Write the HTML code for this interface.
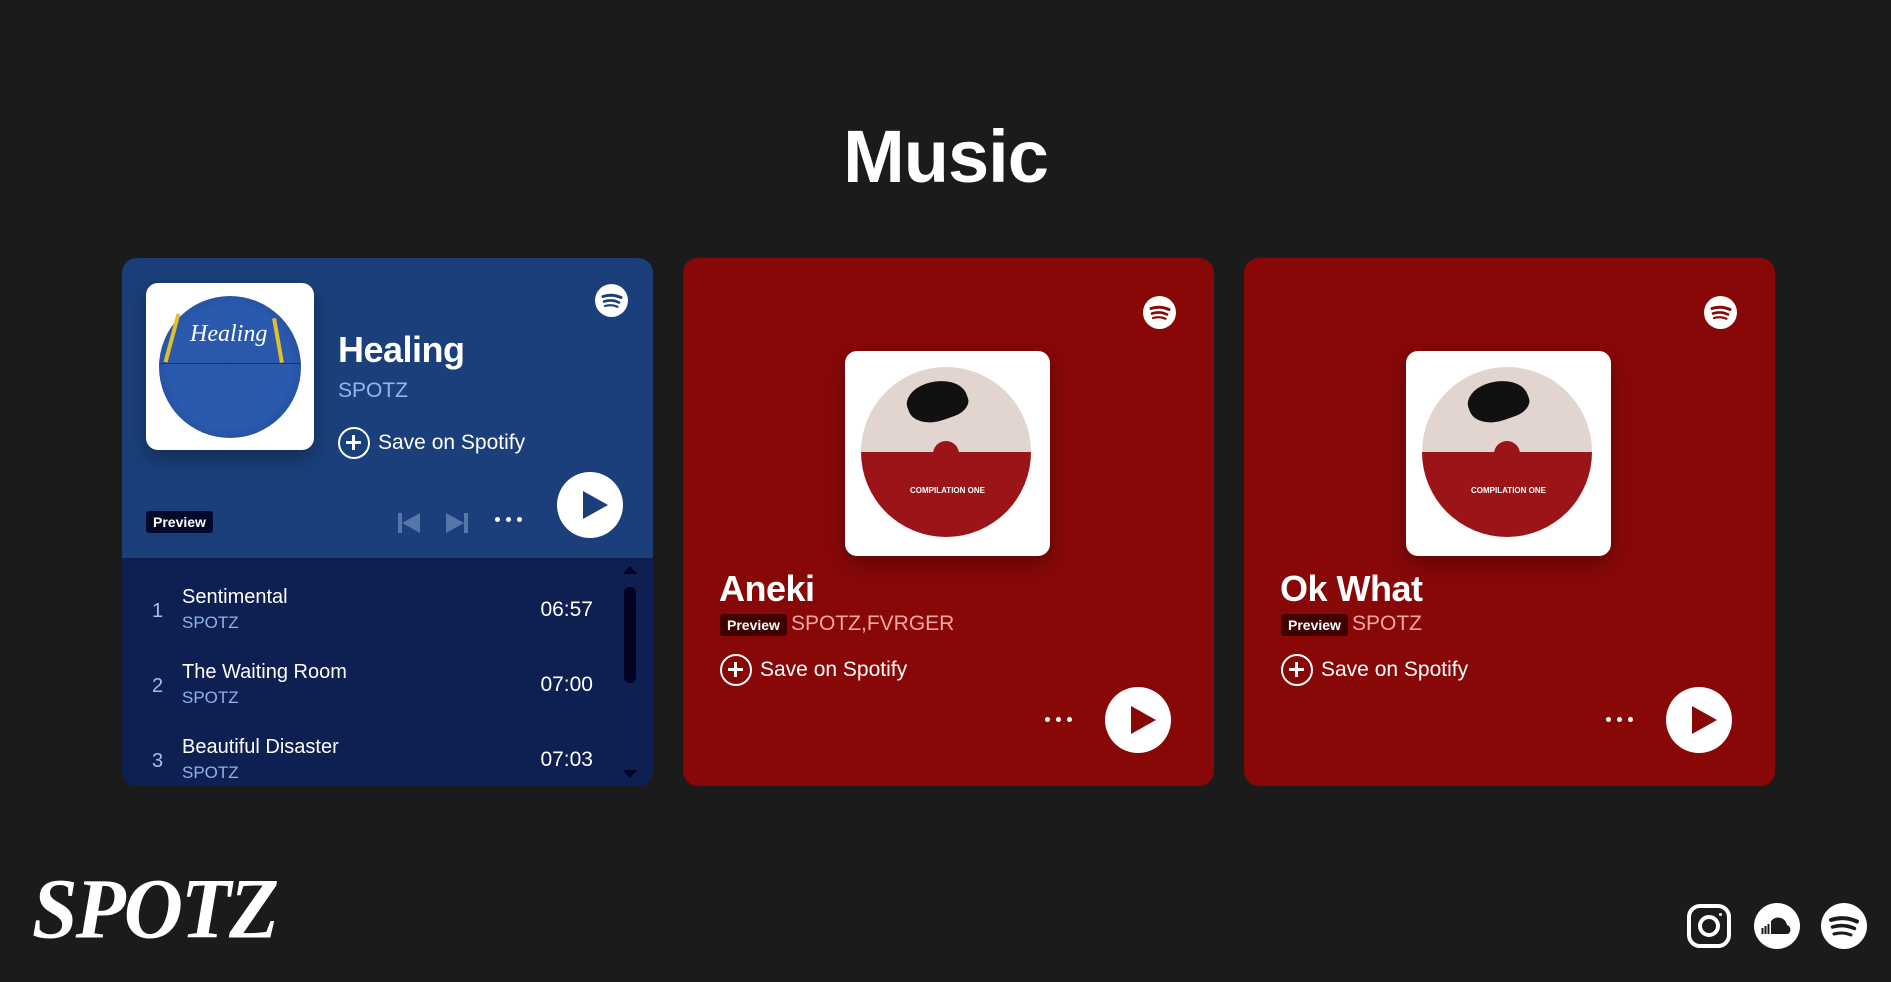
<!DOCTYPE html>
<html><head><meta charset="utf-8"><style>
*{margin:0;padding:0;box-sizing:border-box}
body{width:1891px;height:982px;background:#1b1b1b;font-family:"Liberation Sans",sans-serif;color:#fff;position:relative;overflow:hidden}
.abs{position:absolute}
h1{position:absolute;left:0;width:1891px;top:114px;text-align:center;font-size:74px;font-weight:bold;letter-spacing:-1px}
.card{position:absolute;top:258px;width:531px;height:528px;border-radius:15px;overflow:hidden}
.red{background:#880808}
.blue{background:#1a3f7a}
.sp{position:absolute;width:33px;height:33px;border-radius:50%;background:#fff}
.play{position:absolute;width:66px;height:66px;border-radius:50%;background:#fff}
.play:after{content:"";position:absolute;left:26px;top:19px;border-left:25px solid;border-top:14px solid transparent;border-bottom:14px solid transparent;border-left-color:inherit}
.dots{position:absolute;width:30px;height:6px}
.dots i{position:absolute;top:0;width:5px;height:5px;border-radius:50%;background:#fff}
.save{position:absolute;font-size:21px;display:flex;align-items:center;gap:8px}
.plus{width:32px;height:32px;border:2.5px solid #fff;border-radius:50%;position:relative}
.plus:before{content:"";position:absolute;left:6px;top:12px;width:15px;height:2.5px;background:#fff}
.plus:after{content:"";position:absolute;left:12.3px;top:6px;width:2.5px;height:15px;background:#fff}
.badge{position:absolute;font-size:14px;font-weight:bold;padding:3px 7px;border-radius:3px}
.art{position:absolute;background:#fff;border-radius:12px;box-shadow:0 8px 20px rgba(0,0,0,.3)}
.track{position:absolute;left:0;width:531px;height:50px}
.track .n{position:absolute;left:30px;top:14px;font-size:20px;color:#9fc0ef}
.track .t{position:absolute;left:60px;top:0;font-size:20px}
.track .a{position:absolute;left:60px;top:27px;font-size:17px;color:#8fb3ea}
.track .d{position:absolute;right:60px;top:12px;font-size:21px}
</style></head><body>
<h1>Music</h1>

<!-- Card 1 -->
<div class="card blue" style="left:122px">
  <div class="art" style="left:24px;top:25px;width:168px;height:167px">
    <div class="abs" style="left:13px;top:13px;width:142px;height:142px;border-radius:50%;background:radial-gradient(circle at 50% 50%,#2b57a8 0,#2a5aae 60%,#1f3f86 100%)"></div>
    <div class="abs" style="left:13px;top:80px;width:142px;height:1px;background:#1a3370"></div>
    <div class="abs" style="left:44px;top:38px;font-family:'Liberation Serif',serif;font-style:italic;font-size:24px;color:#fff">Healing</div>
    <div class="abs" style="left:24px;top:30px;width:4px;height:50px;background:#e0c030;transform:rotate(15deg)"></div>
    <div class="abs" style="left:130px;top:35px;width:4px;height:45px;background:#e0c030;transform:rotate(-10deg)"></div>
  </div>
  <div class="abs" style="left:216px;top:71px;font-size:36px;font-weight:bold;letter-spacing:-.5px">Healing</div>
  <div class="abs" style="left:216px;top:121px;font-size:21px;color:#8fb8f0">SPOTZ</div>
  <div class="save" style="left:216px;top:169px"><div class="plus"></div>Save on Spotify</div>
  <div class="sp" style="left:473px;top:26px"><svg width="33" height="33" viewBox="0 0 33 33" fill="none" stroke="#1a3f7a" stroke-linecap="round"><path d="M8 12.5q9-3 18 1" stroke-width="3"/><path d="M9 17.5q8-2.5 15 1" stroke-width="2.6"/><path d="M10 22q6.5-2 12.5 .8" stroke-width="2.2"/></svg></div>
  <div class="badge" style="left:24px;top:253px;background:#04082a">Preview</div>
  <svg class="abs" style="left:274px;top:253px" width="90" height="24"><g fill="#5577aa"><rect x="2" y="2" width="4" height="20"/><path d="M24 2v20L6 12z"/><path d="M50 2v20l18-10z"/><rect x="68" y="2" width="4" height="20"/></g></svg>
  <div class="dots" style="left:373px;top:259px"><i style="left:0"></i><i style="left:11px"></i><i style="left:22px"></i></div>
  <div class="play" style="left:435px;top:214px;border-left-color:#1a3f7a;color:#1a3f7a"></div>
  <div class="abs" style="left:0;top:300px;width:531px;height:228px;background:#0e1f52">
    <div class="track" style="top:28px"><span class="n">1</span><span class="t">Sentimental</span><span class="a">SPOTZ</span><span class="d">06:57</span></div>
    <div class="track" style="top:103px"><span class="n">2</span><span class="t">The Waiting Room</span><span class="a">SPOTZ</span><span class="d">07:00</span></div>
    <div class="track" style="top:178px"><span class="n">3</span><span class="t">Beautiful Disaster</span><span class="a">SPOTZ</span><span class="d">07:03</span></div>
    <div class="abs" style="left:501px;top:8px;border-bottom:8px solid #010325;border-left:7px solid transparent;border-right:7px solid transparent"></div>
    <div class="abs" style="left:502px;top:29px;width:12px;height:96px;border-radius:6px;background:#010325"></div>
    <div class="abs" style="left:501px;top:212px;border-top:8px solid #010325;border-left:7px solid transparent;border-right:7px solid transparent"></div>
  </div>
</div>

<!-- Card 2 & 3 -->
<div class="card red" style="left:683px">
  <div class="art" style="left:162px;top:93px;width:205px;height:205px">
    <div class="abs" style="left:16px;top:16px;width:170px;height:170px;border-radius:50%;background:linear-gradient(#e2d4cf 0,#e2d4cf 50%,#9b1418 50%)"></div>
    <div class="abs" style="left:88px;top:90px;width:26px;height:14px;border-radius:13px 13px 0 0;background:#9b1418"></div>
    <div class="abs" style="left:62px;top:30px;width:60px;height:40px;background:#111;border-radius:40% 60% 30% 50%;transform:rotate(-20deg)"></div>
    <div class="abs" style="left:0;top:135px;width:205px;text-align:center;font-size:8px;font-weight:bold;color:#fff">COMPILATION ONE</div>
  </div>
  <div class="abs" style="left:36px;top:310px;font-size:36px;font-weight:bold;letter-spacing:-.5px">Aneki</div>
  <div class="badge" style="left:37px;top:356px;background:#400000">Preview</div>
  <div class="abs" style="left:108px;top:354px;font-size:21px;color:#f7a6a0">SPOTZ,FVRGER</div>
  <div class="save" style="left:37px;top:396px"><div class="plus"></div>Save on Spotify</div>
  <div class="sp" style="left:460px;top:38px"><svg width="33" height="33" viewBox="0 0 33 33" fill="none" stroke="#880808" stroke-linecap="round"><path d="M8 12.5q9-3 18 1" stroke-width="3"/><path d="M9 17.5q8-2.5 15 1" stroke-width="2.6"/><path d="M10 22q6.5-2 12.5 .8" stroke-width="2.2"/></svg></div>
  <div class="dots" style="left:362px;top:459px"><i style="left:0"></i><i style="left:11px"></i><i style="left:22px"></i></div>
  <div class="play" style="left:422px;top:429px;border-left-color:#880808"></div>
</div>
<div class="card red" style="left:1244px">
  <div class="art" style="left:162px;top:93px;width:205px;height:205px">
    <div class="abs" style="left:16px;top:16px;width:170px;height:170px;border-radius:50%;background:linear-gradient(#e2d4cf 0,#e2d4cf 50%,#9b1418 50%)"></div>
    <div class="abs" style="left:88px;top:90px;width:26px;height:14px;border-radius:13px 13px 0 0;background:#9b1418"></div>
    <div class="abs" style="left:62px;top:30px;width:60px;height:40px;background:#111;border-radius:40% 60% 30% 50%;transform:rotate(-20deg)"></div>
    <div class="abs" style="left:0;top:135px;width:205px;text-align:center;font-size:8px;font-weight:bold;color:#fff">COMPILATION ONE</div>
  </div>
  <div class="abs" style="left:36px;top:310px;font-size:36px;font-weight:bold;letter-spacing:-.5px">Ok What</div>
  <div class="badge" style="left:37px;top:356px;background:#400000">Preview</div>
  <div class="abs" style="left:108px;top:354px;font-size:21px;color:#f7a6a0">SPOTZ</div>
  <div class="save" style="left:37px;top:396px"><div class="plus"></div>Save on Spotify</div>
  <div class="sp" style="left:460px;top:38px"><svg width="33" height="33" viewBox="0 0 33 33" fill="none" stroke="#880808" stroke-linecap="round"><path d="M8 12.5q9-3 18 1" stroke-width="3"/><path d="M9 17.5q8-2.5 15 1" stroke-width="2.6"/><path d="M10 22q6.5-2 12.5 .8" stroke-width="2.2"/></svg></div>
  <div class="dots" style="left:362px;top:459px"><i style="left:0"></i><i style="left:11px"></i><i style="left:22px"></i></div>
  <div class="play" style="left:422px;top:429px;border-left-color:#880808"></div>
</div>

<!-- Footer -->
<div class="abs" style="left:32px;top:862px;font-family:'Liberation Serif',serif;font-style:italic;font-weight:bold;font-size:82px;letter-spacing:-2px;transform:scaleY(1.05)">SPOTZ</div>
<svg class="abs" style="left:1686px;top:903px" width="46" height="46" viewBox="0 0 46 46" fill="none" stroke="#fff" stroke-width="4"><rect x="3" y="3" width="40" height="40" rx="11"/><circle cx="23" cy="23" r="9"/><circle cx="34.5" cy="11.5" r="1.5" fill="#fff" stroke="none"/></svg>
<svg class="abs" style="left:1754px;top:903px" width="46" height="46" viewBox="0 0 46 46"><circle cx="23" cy="23" r="23" fill="#fff"/><g fill="#1b1b1b"><path d="M17 31V18a9 9 0 0 1 16 4a5 5 0 0 1 1 9z"/><rect x="13.5" y="21" width="2" height="10"/><rect x="10.5" y="23" width="2" height="8"/><rect x="7.5" y="25" width="2" height="6"/></g></svg>
<svg class="abs" style="left:1821px;top:903px" width="46" height="46" viewBox="0 0 46 46"><circle cx="23" cy="23" r="23" fill="#fff"/><g fill="none" stroke="#1b1b1b" stroke-linecap="round"><path d="M10 17q13-4.5 26 1.5" stroke-width="4"/><path d="M11.5 24q11-3.5 22 1.5" stroke-width="3.5"/><path d="M13 31q9-2.5 17 1" stroke-width="3"/></g></svg>
</body></html>
